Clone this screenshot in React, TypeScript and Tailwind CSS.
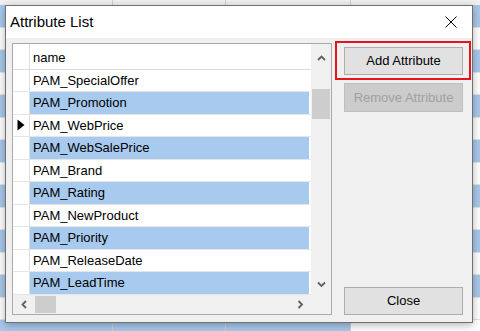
import React from "react";

const rows = [
  "PAM_SpecialOffer",
  "PAM_Promotion",
  "PAM_WebPrice",
  "PAM_WebSalePrice",
  "PAM_Brand",
  "PAM_Rating",
  "PAM_NewProduct",
  "PAM_Priority",
  "PAM_ReleaseDate",
  "PAM_LeadTime",
];

const font = { fontFamily: '"Liberation Sans", Arial, sans-serif' };

function Chevron(props: { dir: "up" | "down" | "left" | "right" }) {
  const d = {
    up: "M1 5 L4.5 1.5 L8 5",
    down: "M1 1.5 L4.5 5 L8 1.5",
    left: "M5 1 L1.5 4.5 L5 8",
    right: "M1.5 1 L5 4.5 L1.5 8",
  }[props.dir];
  const horiz = props.dir === "up" || props.dir === "down";
  return (
    <svg
      width={horiz ? 9 : 7}
      height={horiz ? 7 : 9}
      viewBox={horiz ? "0 0 9 7" : "0 0 7 9"}
    >
      <path d={d} fill="none" stroke="#606060" strokeWidth="1.8" />
    </svg>
  );
}

function Background() {
  const bg = Array.from({ length: 15 });
  return (
    <div className="flex h-full w-full flex-col bg-white">
      <div className="flex h-[5px] shrink-0 bg-[#f0f0f0]">
        <div className="w-[113px] border-r border-[#d0d0d0]" />
        <div className="w-[113px] border-r border-[#d0d0d0]" />
        <div className="w-[125px] border-r border-[#d0d0d0]" />
      </div>
      {bg.map((_, i) => {
        const blue = i % 2 === 0;
        const c = blue ? "bg-[#a8c8ec]" : "bg-white";
        return (
          <div key={i} className="flex h-[22.5px] shrink-0 border-b border-[#e4e4e4]">
            <div className={`w-[113px] border-r border-[#d0d0d0] ${c}`} />
            <div className={`w-[113px] border-r border-[#d0d0d0] ${c}`} />
            <div className={`w-[125px] border-r border-[#d0d0d0] ${c}`} />
            <div className={`flex-1 ${i === 14 ? "bg-white" : c}`} />
          </div>
        );
      })}
    </div>
  );
}

function Grid() {
  return (
    <div className="flex h-[272px] w-[320px] shrink-0 flex-col border border-[#a9a9a9] bg-white">
      <div className="flex flex-1">
        <div className="flex flex-1 flex-col">
          <div className="flex h-[25.5px] border-b border-[#dcdcdc]">
            <div className="w-[17px] border-r border-[#dcdcdc]" />
            <div className="flex flex-1 items-center pl-[3px] pt-[2px] text-[13px] text-black">
              name
            </div>
          </div>
          {rows.map((r, i) => {
            const sel = i % 2 === 1;
            return (
              <div key={r} className="flex h-[22.5px] border-b border-[#e6e6e6]">
                <div className="flex w-[17px] items-center justify-center border-r border-[#dcdcdc]">
                  {i === 2 && (
                    <svg width="8" height="12" viewBox="0 0 8 12">
                      <path d="M0.5 0.5 L7.5 6 L0.5 11.5 Z" fill="#000" />
                    </svg>
                  )}
                </div>
                <div
                  className={`mr-[2px] flex flex-1 items-center pl-[3px] text-[13px] text-black ${
                    sel ? "bg-[#a8caee]" : "bg-white"
                  }`}
                >
                  {r}
                </div>
              </div>
            );
          })}
        </div>
        <div className="flex w-[20px] flex-col bg-[#f0f0f0]">
          <div className="flex h-[28px] items-center justify-center">
            <Chevron dir="up" />
          </div>
          <div className="h-[17px]" />
          <div className="mx-[1px] h-[30px] bg-[#cdcdcd]" />
          <div className="flex-1" />
          <div className="flex h-[22px] items-center justify-center">
            <Chevron dir="down" />
          </div>
        </div>
      </div>
      <div className="flex h-[19px] shrink-0 bg-[#f0f0f0]">
        <div className="flex w-[22px] items-center justify-center">
          <Chevron dir="left" />
        </div>
        <div className="my-[1px] w-[21px] bg-[#cdcdcd]" />
        <div className="flex-1" />
        <div className="flex w-[22px] items-center justify-center">
          <Chevron dir="right" />
        </div>
        <div className="w-[20px]" />
      </div>
    </div>
  );
}

export default function App() {
  return (
    <div className="relative h-[331px] w-[480px] overflow-hidden" style={font}>
      <Background />
      <div className="absolute left-[5px] top-[5px] flex h-[318px] w-[468px] flex-col border border-[#707070] bg-[#f0f0f0] shadow-[0_2px_8px_rgba(0,0,0,0.3)]">
        <div className="flex h-[32px] shrink-0 items-center justify-between bg-white pl-[4px] pr-[15px]">
          <span className="text-[15px] text-black">Attribute List</span>
          <svg width="12" height="12" viewBox="0 0 12 12">
            <path d="M0.5 0.5 L11.5 11.5 M11.5 0.5 L0.5 11.5" stroke="#000" strokeWidth="1" />
          </svg>
        </div>
        <div className="flex flex-1 pl-[6px] pt-[5px]">
          <Grid />
          <div className="ml-[12px] flex h-[272px] w-[119px] flex-col">
            <div className="relative mt-[4px]">
              <button className="flex h-[28px] w-full items-center justify-center border border-[#adadad] bg-[#e1e1e1] text-[13px] text-black">
                Add Attribute
              </button>
              <div className="absolute -bottom-[5px] -left-[9px] -right-[8px] -top-[6px] border-2 border-[#e8141c]" />
            </div>
            <button className="mt-[8px] flex h-[29px] w-full items-center justify-center border border-[#bfbfbf] bg-[#cccccc] text-[13px] text-[#a0a0a0]">
              Remove Attribute
            </button>
            <button className="mt-auto flex h-[28px] w-full items-center justify-center border border-[#adadad] bg-[#e1e1e1] text-[13px] text-black">
              Close
            </button>
          </div>
        </div>
      </div>
    </div>
  );
}
